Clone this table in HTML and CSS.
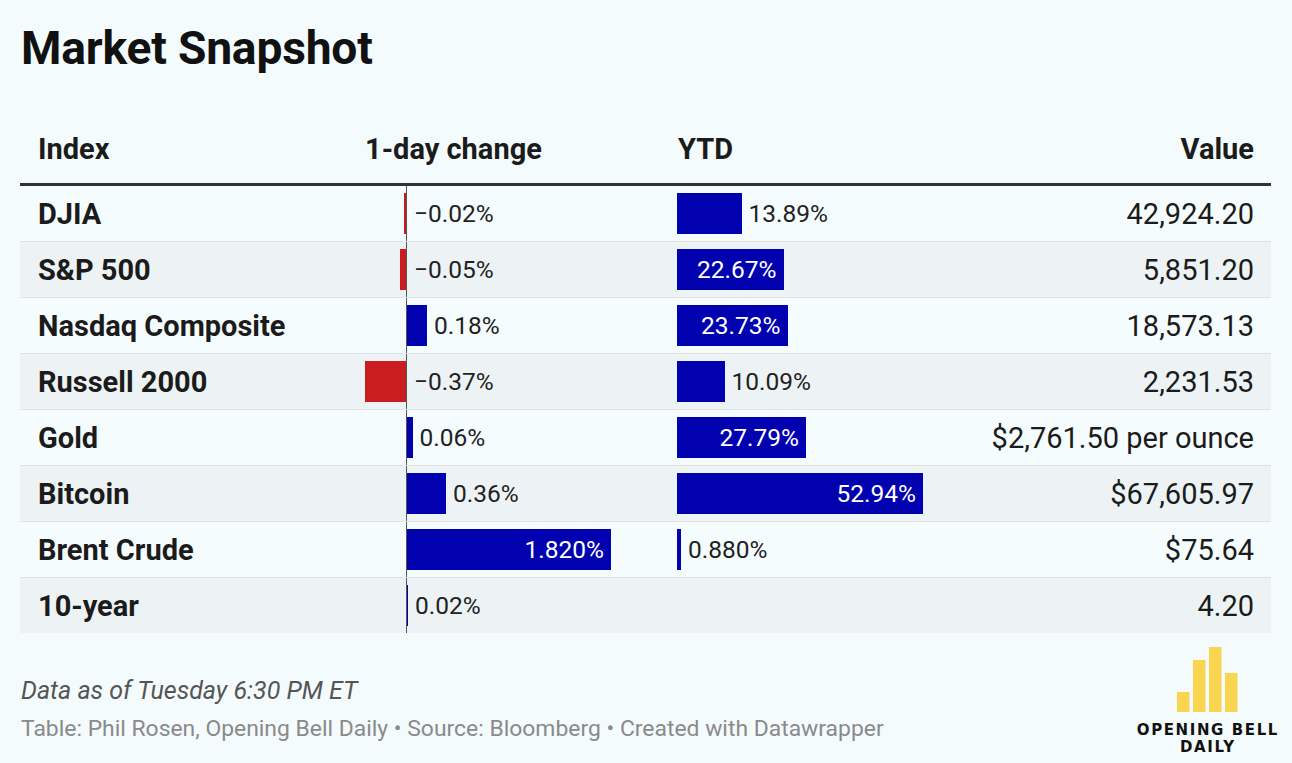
FILE: index.html
```html
<!DOCTYPE html>
<html>
<head>
<meta charset="utf-8">
<link rel="stylesheet" href="styles.css">
</head>
<body>
<div class="page">
  <h1 class="title">Market Snapshot</h1>
  <div class="table">
    <div class="row head">
      <div class="c-name">Index</div>
      <div class="c-day">1-day change</div>
      <div class="c-ytd">YTD</div>
      <div class="c-val">Value</div>
    </div>

    <div class="row odd">
      <div class="c-name">DJIA</div>
      <div class="c-day">
        <div class="neg"><div class="bar red" style="width:2px"></div></div>
        <div class="zero"></div>
        <div class="pos"><span class="lbl">−0.02%</span></div>
      </div>
      <div class="c-ytd"><div class="bar blue" style="width:64.5px"></div><span class="lbl">13.89%</span></div>
      <div class="c-val">42,924.20</div>
    </div>

    <div class="row even">
      <div class="c-name">S&amp;P 500</div>
      <div class="c-day">
        <div class="neg"><div class="bar red" style="width:6px"></div></div>
        <div class="zero"></div>
        <div class="pos"><span class="lbl">−0.05%</span></div>
      </div>
      <div class="c-ytd"><div class="bar blue in" style="width:106.5px"><span>22.67%</span></div></div>
      <div class="c-val">5,851.20</div>
    </div>

    <div class="row odd">
      <div class="c-name">Nasdaq Composite</div>
      <div class="c-day">
        <div class="neg"></div>
        <div class="zero"></div>
        <div class="pos"><div class="bar blue" style="width:20px"></div><span class="lbl">0.18%</span></div>
      </div>
      <div class="c-ytd"><div class="bar blue in" style="width:110.5px"><span>23.73%</span></div></div>
      <div class="c-val">18,573.13</div>
    </div>

    <div class="row even">
      <div class="c-name">Russell 2000</div>
      <div class="c-day">
        <div class="neg"><div class="bar red" style="width:41.5px"></div></div>
        <div class="zero"></div>
        <div class="pos"><span class="lbl">−0.37%</span></div>
      </div>
      <div class="c-ytd"><div class="bar blue" style="width:47.5px"></div><span class="lbl">10.09%</span></div>
      <div class="c-val">2,231.53</div>
    </div>

    <div class="row odd">
      <div class="c-name">Gold</div>
      <div class="c-day">
        <div class="neg"></div>
        <div class="zero"></div>
        <div class="pos"><div class="bar blue" style="width:5.5px"></div><span class="lbl">0.06%</span></div>
      </div>
      <div class="c-ytd"><div class="bar blue in" style="width:129px"><span>27.79%</span></div></div>
      <div class="c-val">$2,761.50 per ounce</div>
    </div>

    <div class="row even">
      <div class="c-name">Bitcoin</div>
      <div class="c-day">
        <div class="neg"></div>
        <div class="zero"></div>
        <div class="pos"><div class="bar blue" style="width:39px"></div><span class="lbl">0.36%</span></div>
      </div>
      <div class="c-ytd"><div class="bar blue in" style="width:246px"><span>52.94%</span></div></div>
      <div class="c-val">$67,605.97</div>
    </div>

    <div class="row odd">
      <div class="c-name">Brent Crude</div>
      <div class="c-day">
        <div class="neg"></div>
        <div class="zero"></div>
        <div class="pos"><div class="bar blue in" style="width:204px"><span>1.820%</span></div></div>
      </div>
      <div class="c-ytd"><div class="bar blue" style="width:4px"></div><span class="lbl">0.880%</span></div>
      <div class="c-val">$75.64</div>
    </div>

    <div class="row even last">
      <div class="c-name">10-year</div>
      <div class="c-day">
        <div class="neg"></div>
        <div class="zero"></div>
        <div class="pos"><div class="bar blue" style="width:1px"></div><span class="lbl">0.02%</span></div>
      </div>
      <div class="c-ytd"></div>
      <div class="c-val">4.20</div>
    </div>
  </div>

  <div class="footer">
    <div class="notes">
      <div class="note">Data as of Tuesday 6:30 PM ET</div>
      <div class="source">Table: Phil Rosen, Opening Bell Daily • Source: Bloomberg • Created with Datawrapper</div>
    </div>
    <div class="logo">
      <svg class="logo-bars" width="61" height="65" viewBox="0 0 61 65">
        <rect x="0" y="45" width="12.5" height="20" fill="#f9d550"/>
        <rect x="16" y="13" width="12.5" height="52" fill="#f9d550"/>
        <rect x="32" y="0" width="12.5" height="65" fill="#f9d550"/>
        <rect x="48" y="26" width="12.5" height="39" fill="#f9d550"/>
      </svg>
      <div class="logo-text">OPENING BELL<br>DAILY</div>
    </div>
  </div>
</div>
</body>
</html>
```
FILE: styles.css
```css
html, body {
  margin: 0;
  padding: 0;
  background: #f3fbfd;
}
body {
  font-family: Roboto, "Liberation Sans", sans-serif;
  color: #1d1d1d;
}
.page {
  width: 1292px;
  height: 763px;
  padding: 0 21px 0 20px;
  box-sizing: border-box;
  display: flex;
  flex-direction: column;
}
.title {
  margin: 22px 0 0 1px;
  font-size: 46.2px;
  line-height: 52px;
  font-weight: 700;
  color: #111;
  letter-spacing: -0.2px;
}
.table {
  margin-top: 46px;
  display: flex;
  flex-direction: column;
}
.row {
  display: grid;
  grid-template-columns: 345px 312px 1fr auto;
  height: 56px;
  box-sizing: border-box;
  border-bottom: 1px solid #dde3e6;
  align-items: stretch;
}
.row.odd { background: #f5fcfe; }
.row.even { background: #edf3f5; }
.row.last { border-bottom: none; height: 55px; }
.row.head {
  height: 66px;
  border-bottom: 3px solid #333;
  font-weight: 700;
  font-size: 29px;
  color: #1b1b1b;
  align-items: center;
  padding-bottom: 6px;
}
.row.head > div { display: block; }
.row.head .c-name { padding-left: 18px; }
.row.head .c-day { padding-left: 0; }
.row.head .c-ytd { padding-left: 1px; }
.c-name {
  padding-left: 18px;
  font-weight: 700;
  font-size: 29px;
  display: flex;
  align-items: center;
  color: #1b1b1b;
}
.c-day {
  display: flex;
  align-items: stretch;
}
.neg {
  width: 41px;
  display: flex;
  justify-content: flex-end;
  align-items: center;
}
.zero {
  width: 1px;
  background: #555;
}
.pos {
  flex: 1;
  display: flex;
  align-items: center;
}
.bar {
  height: 41px;
  flex: none;
  box-sizing: border-box;
}
.bar.red { background: #c91d1f; }
.bar.blue { background: #0101b0; }
.bar.in {
  display: flex;
  align-items: center;
  justify-content: flex-end;
  padding-right: 7px;
  color: #fff;
  font-size: 24.5px;
}
.lbl {
  margin-left: 7px;
  font-size: 24.5px;
  color: #222;
}
.c-day .pos > .lbl:first-child { margin-left: 7px; }
.c-ytd {
  display: flex;
  align-items: center;
}
.c-val {
  padding-right: 17px;
  display: flex;
  align-items: center;
  justify-content: flex-end;
  font-size: 29px;
  color: #1b1b1b;
}
.row.head .c-val { justify-content: flex-end; display: flex; }
.footer {
  display: flex;
  justify-content: space-between;
  align-items: flex-start;
  margin-top: 14px;
}
.notes {
  padding-top: 30px;
  padding-left: 1px;
}
.note {
  font-style: italic;
  font-size: 25px;
  color: #555;
  line-height: 28px;
}
.source {
  margin-top: 10px;
  font-size: 22.9px;
  color: #8a8a8a;
  line-height: 28px;
}
.logo {
  display: flex;
  flex-direction: column;
  align-items: center;
  margin-right: -8px;
}
.logo-bars { display: block; }
.logo-text {
  margin-top: 10px;
  font-family: "DejaVu Sans", sans-serif;
  font-weight: 700;
  font-size: 15px;
  letter-spacing: 1.6px;
  line-height: 17px;
  text-align: center;
  color: #111;
}
```
